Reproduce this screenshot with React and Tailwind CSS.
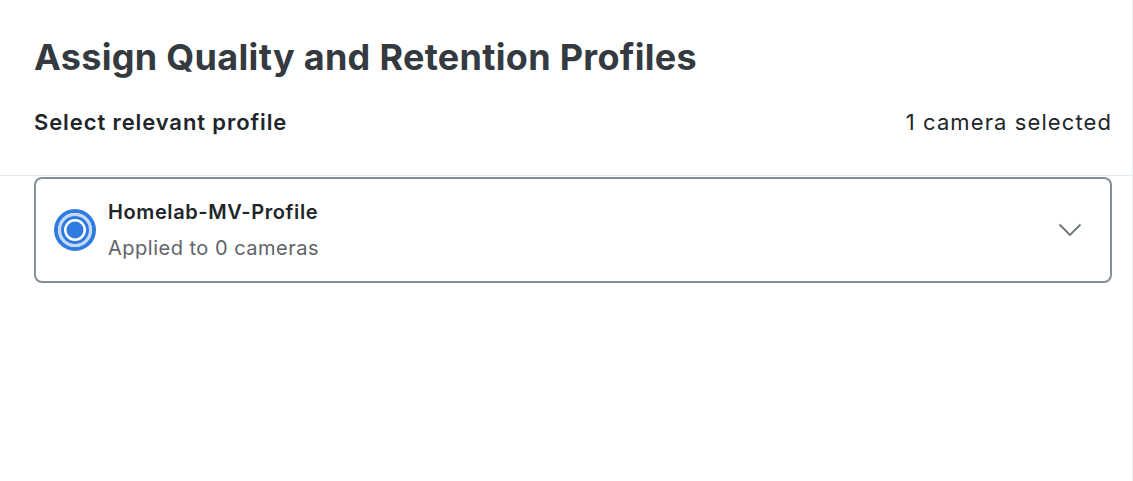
export default function App() {
  return (
    <div className="w-[1133px] h-[481px] bg-white border-r border-[#e9ecef] font-['Inter',sans-serif]">
      <div className="pl-[34px] pr-[20px] pt-[35px] pb-[39px]">
        <h1 className="text-[36px] leading-[44px] font-bold text-[#343a40] tracking-[0.3px]">
          Assign Quality and Retention Profiles
        </h1>
        <div className="mt-[29px] flex items-center justify-between h-[28px]">
          <div className="text-[22px] leading-[28px] font-semibold text-[#212529] tracking-[0.9px]">Select relevant profile</div>
          <div className="text-[22px] leading-[28px] text-[#212529] tracking-[1.1px]">1 camera selected</div>
        </div>
      </div>
      <div className="h-px bg-[#e5e7eb]" />
      <div className="pl-[34px] pr-[20px] pt-[1px]">
        <div className="h-[106px] border-2 border-[#868e96] rounded-[8px] flex items-center pl-[18px] pr-[28px]">
          <svg width="42" height="42" viewBox="0 0 42 42" className="shrink-0">
            <circle cx="21" cy="21" r="19" fill="none" stroke="#2f7be0" strokeWidth="4" />
            <circle cx="21" cy="21" r="15.5" fill="none" stroke="#c3d9f6" strokeWidth="3" />
            <circle cx="21" cy="21" r="12.5" fill="none" stroke="#2f7be0" strokeWidth="3" />
            <circle cx="21" cy="21" r="8.5" fill="#2f7be0" />
          </svg>
          <div className="ml-[12px] flex flex-col">
            <div className="text-[20px] leading-[24px] font-semibold text-[#212529] tracking-[0.6px]">Homelab-MV-Profile</div>
            <div className="mt-[12px] text-[20px] leading-[24px] text-[#5f6368] tracking-[0.5px]">Applied to 0 cameras</div>
          </div>
          <div className="ml-auto">
            <svg width="24" height="14" viewBox="0 0 24 14">
              <path d="M1.5 1.5 L12 12 L22.5 1.5" fill="none" stroke="#6c757d" strokeWidth="1.8" />
            </svg>
          </div>
        </div>
      </div>
    </div>
  );
}
